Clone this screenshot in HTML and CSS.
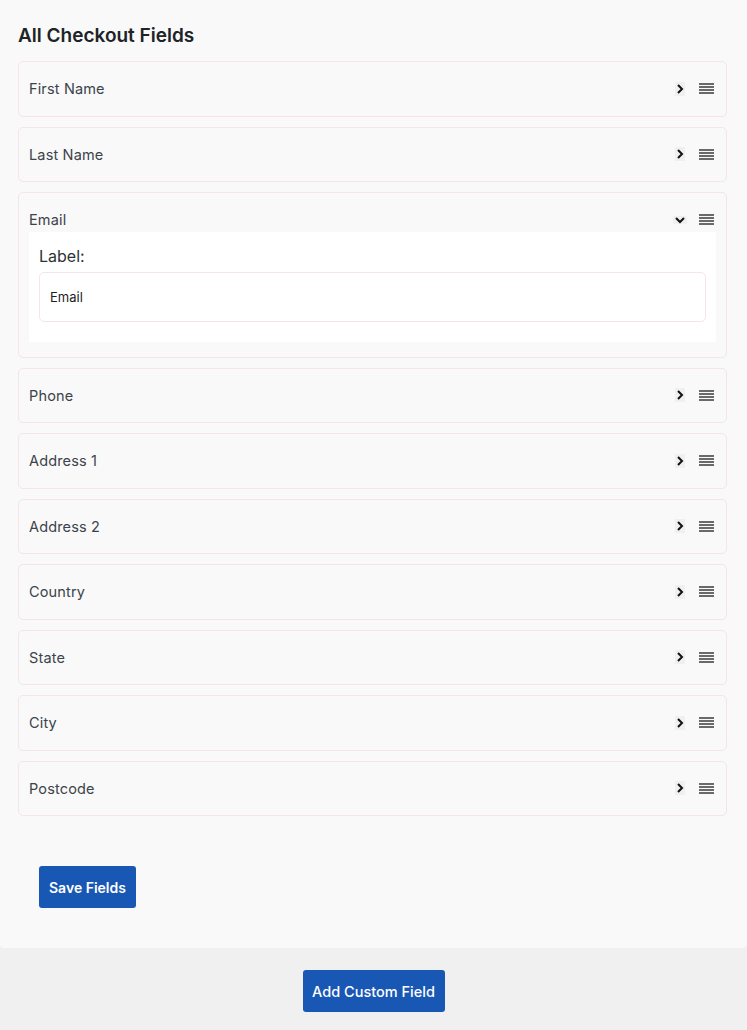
FILE: index.html
```html
<!DOCTYPE html>
<html>
<head>
<meta charset="utf-8">
<link rel="stylesheet" href="styles.css">
</head>
<body>
<div class="main">
  <h2 class="title">All Checkout Fields</h2>
  <div class="list">
    <div class="card"><div class="head"><span class="name">First Name</span><span class="toggle"><svg width="8" height="12" viewBox="0 0 8 12"><path d="M2 2l4 4-4 4" fill="none" stroke="#111" stroke-width="2"/></svg></span><span class="drag"><i></i><i></i><i></i><i></i></span></div></div>
    <div class="card"><div class="head"><span class="name">Last Name</span><span class="toggle"><svg width="8" height="12" viewBox="0 0 8 12"><path d="M2 2l4 4-4 4" fill="none" stroke="#111" stroke-width="2"/></svg></span><span class="drag"><i></i><i></i><i></i><i></i></span></div></div>
    <div class="card open"><div class="head"><span class="name">Email</span><span class="toggle down"><svg width="12" height="8" viewBox="0 0 12 8"><path d="M2 2l4 4 4-4" fill="none" stroke="#111" stroke-width="2"/></svg></span><span class="drag"><i></i><i></i><i></i><i></i></span></div>
      <div class="panel">
        <div class="label">Label:</div>
        <div class="input">Email</div>
      </div>
    </div>
    <div class="card"><div class="head"><span class="name">Phone</span><span class="toggle"><svg width="8" height="12" viewBox="0 0 8 12"><path d="M2 2l4 4-4 4" fill="none" stroke="#111" stroke-width="2"/></svg></span><span class="drag"><i></i><i></i><i></i><i></i></span></div></div>
    <div class="card"><div class="head"><span class="name">Address 1</span><span class="toggle"><svg width="8" height="12" viewBox="0 0 8 12"><path d="M2 2l4 4-4 4" fill="none" stroke="#111" stroke-width="2"/></svg></span><span class="drag"><i></i><i></i><i></i><i></i></span></div></div>
    <div class="card"><div class="head"><span class="name">Address 2</span><span class="toggle"><svg width="8" height="12" viewBox="0 0 8 12"><path d="M2 2l4 4-4 4" fill="none" stroke="#111" stroke-width="2"/></svg></span><span class="drag"><i></i><i></i><i></i><i></i></span></div></div>
    <div class="card"><div class="head"><span class="name">Country</span><span class="toggle"><svg width="8" height="12" viewBox="0 0 8 12"><path d="M2 2l4 4-4 4" fill="none" stroke="#111" stroke-width="2"/></svg></span><span class="drag"><i></i><i></i><i></i><i></i></span></div></div>
    <div class="card"><div class="head"><span class="name">State</span><span class="toggle"><svg width="8" height="12" viewBox="0 0 8 12"><path d="M2 2l4 4-4 4" fill="none" stroke="#111" stroke-width="2"/></svg></span><span class="drag"><i></i><i></i><i></i><i></i></span></div></div>
    <div class="card"><div class="head"><span class="name">City</span><span class="toggle"><svg width="8" height="12" viewBox="0 0 8 12"><path d="M2 2l4 4-4 4" fill="none" stroke="#111" stroke-width="2"/></svg></span><span class="drag"><i></i><i></i><i></i><i></i></span></div></div>
    <div class="card"><div class="head"><span class="name">Postcode</span><span class="toggle"><svg width="8" height="12" viewBox="0 0 8 12"><path d="M2 2l4 4-4 4" fill="none" stroke="#111" stroke-width="2"/></svg></span><span class="drag"><i></i><i></i><i></i><i></i></span></div></div>
  </div>
  <div class="save-row"><button class="btn save">Save Fields</button></div>
</div>
<div class="footer"><button class="btn add">Add Custom Field</button></div>
</body>
</html>
```
FILE: styles.css
```css
* { box-sizing: border-box; }
html, body { margin: 0; padding: 0; }
body {
  background: #f0f0f0;
  font-family: Inter, "Noto Sans", sans-serif;
  color: #3c434a;
}
.main {
  background: #f9f9f9;
  padding: 25px 20px 40px 18px;
  border-radius: 0 0 4px 4px;
}
.title {
  margin: 0 0 14px 0;
  font-size: 19px;
  line-height: 22px;
  font-weight: 600;
  color: #1d2327;
}
.list {
  display: flex;
  flex-direction: column;
  gap: 10px;
}
.card {
  border: 1px solid #f5e5e8;
  border-radius: 5px;
  background: #f9f9f9;
  padding: 17px 10px;
}
.card.open { padding-bottom: 15px; }
.head {
  display: flex;
  align-items: center;
  height: 19.5px;
}
.name {
  flex: 1;
  font-size: 14.5px;
  letter-spacing: 0.15px;
  line-height: 19.5px;
}
.toggle {
  width: 10px;
  height: 14px;
  display: flex;
  align-items: center;
  justify-content: center;
  background: #f0f0f0;
  margin-right: 14px;
}
.toggle.down { width: 14px; height: 8px; margin-right: 12px; }
.drag {
  width: 15px;
  display: flex;
  flex-direction: column;
  gap: 1px;
  margin-right: 2px;
}
.drag i {
  display: block;
  height: 2px;
  background: #6a6a6a;
}
.panel {
  background: #fff;
  margin-top: 2px;
  padding: 13px 10px 20px 10px;
}
.label {
  font-size: 16px;
  line-height: 22px;
  font-weight: 400;
  color: #2c3338;
  margin-bottom: 5px;
}
.input {
  height: 50px;
  border: 1px solid #f5e5e8;
  border-radius: 5px;
  padding: 0 10px;
  display: flex;
  align-items: center;
  font-size: 13px;
  color: #1e1e1e;
}
.save-row {
  padding: 50px 0 0 21px;
}
.btn {
  background: #1957b5;
  color: #fff;
  border: none;
  border-radius: 3px;
  font-family: Inter, "Noto Sans", sans-serif;
  height: 42px;
  padding: 0;
  cursor: pointer;
}
.save {
  font-size: 14px;
  font-weight: 600;
  width: 97px;
}
.footer {
  display: flex;
  justify-content: center;
  padding: 22px 0 18px;
}
.add {
  font-size: 14.5px;
  font-weight: 500;
  width: 142px;
}
```
